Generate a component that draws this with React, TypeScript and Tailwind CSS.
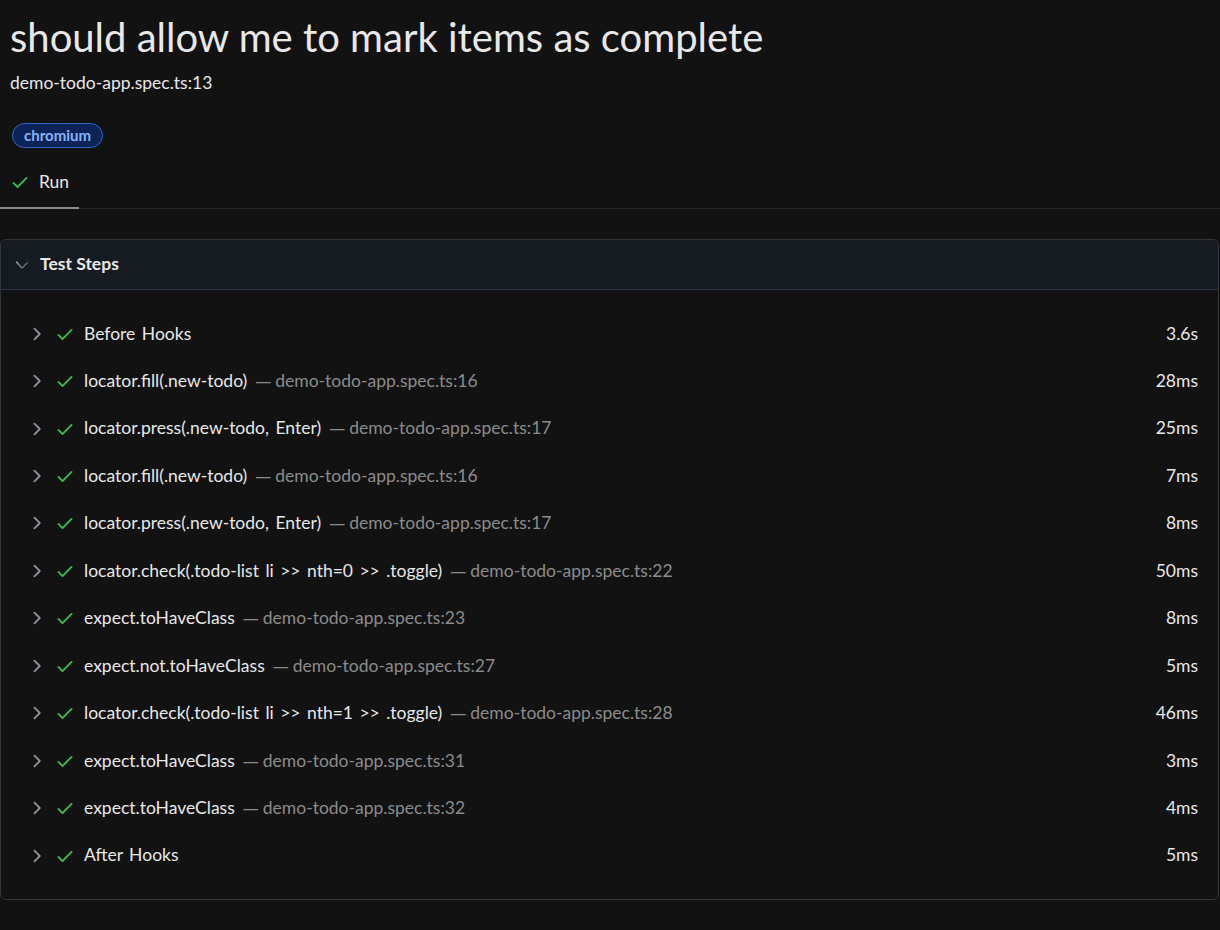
const FONT = "font-['Lato','Noto_Sans',sans-serif]";

const CheckIcon = ({ className = '' }: { className?: string }) => (
  <svg viewBox="0 0 16 16" width={20} height={20} className={className} fill="currentColor">
    <path d="M13.78 4.22a.75.75 0 0 1 0 1.06l-7.25 7.25a.75.75 0 0 1-1.06 0L2.22 9.28a.751.751 0 0 1 .018-1.042.751.751 0 0 1 1.042-.018L6 10.94l6.72-6.72a.75.75 0 0 1 1.06 0Z" />
  </svg>
);

const ChevronRight = () => (
  <svg viewBox="0 0 16 16" width={20} height={20} fill="currentColor" className="text-[#8b949e] shrink-0">
    <path d="M6.22 3.22a.75.75 0 0 1 1.06 0l4.25 4.25a.75.75 0 0 1 0 1.06l-4.25 4.25a.751.751 0 0 1-1.042-.018.751.751 0 0 1-.018-1.042L9.94 8 6.22 4.28a.75.75 0 0 1 0-1.06Z" />
  </svg>
);

const ChevronDown = () => (
  <svg viewBox="0 0 16 16" width={20} height={20} fill="currentColor" className="text-[#8b949e] shrink-0">
    <path d="M12.78 5.22a.749.749 0 0 1 0 1.06l-4.25 4.25a.749.749 0 0 1-1.06 0L3.22 6.28a.749.749 0 1 1 1.06-1.06L8 9.939l3.72-3.719a.749.749 0 0 1 1.06 0Z" />
  </svg>
);

const steps: { title: string; loc?: string; time: string }[] = [
  { title: 'Before Hooks', time: '3.6s' },
  { title: 'locator.fill(.new-todo)', loc: 'demo-todo-app.spec.ts:16', time: '28ms' },
  { title: 'locator.press(.new-todo, Enter)', loc: 'demo-todo-app.spec.ts:17', time: '25ms' },
  { title: 'locator.fill(.new-todo)', loc: 'demo-todo-app.spec.ts:16', time: '7ms' },
  { title: 'locator.press(.new-todo, Enter)', loc: 'demo-todo-app.spec.ts:17', time: '8ms' },
  { title: 'locator.check(.todo-list li >> nth=0 >> .toggle)', loc: 'demo-todo-app.spec.ts:22', time: '50ms' },
  { title: 'expect.toHaveClass', loc: 'demo-todo-app.spec.ts:23', time: '8ms' },
  { title: 'expect.not.toHaveClass', loc: 'demo-todo-app.spec.ts:27', time: '5ms' },
  { title: 'locator.check(.todo-list li >> nth=1 >> .toggle)', loc: 'demo-todo-app.spec.ts:28', time: '46ms' },
  { title: 'expect.toHaveClass', loc: 'demo-todo-app.spec.ts:31', time: '3ms' },
  { title: 'expect.toHaveClass', loc: 'demo-todo-app.spec.ts:32', time: '4ms' },
  { title: 'After Hooks', time: '5ms' },
];

export default function App() {
  return (
    <div className={`${FONT} min-h-[930px] bg-[#121212] text-[#e8e8e8]`}>
      <div className="px-[10px] pt-[11px]">
        <h1 className="text-[40px] leading-[52px]">should allow me to mark items as complete</h1>
        <div className="text-[17.5px] leading-[24px] mt-[8px]">demo-todo-app.spec.ts:13</div>
        <div className="mt-[28px] flex">
          <span className="ml-[2px] h-[25px] px-[11px] flex items-center rounded-full border border-[#3463c4] bg-[#0c2358] text-[#86b4f5] text-[15px] font-bold">
            chromium
          </span>
        </div>
      </div>
      <div className="mt-[23px] border-b border-[#2a2a2a] flex">
        <div className="w-[79px] h-[38px] -mb-px border-b-2 border-[#8a8a8a] flex items-start pl-[10px] gap-[9px]">
          <CheckIcon className="text-[#3fb950] mt-[1px]" />
          <span className="text-[17.5px] leading-[22px]">Run</span>
        </div>
      </div>
      <div className="mt-[30px] mr-px border border-[#30363d] rounded-[6px] overflow-hidden">
        <div className="h-[50px] bg-[#161b22] border-b border-[#30363d] flex items-center pl-[11px] gap-[8px]">
          <ChevronDown />
          <span className="text-[17.5px] font-bold">Test Steps</span>
        </div>
        <div className="py-[20px]">
          {steps.map((s, i) => (
            <div key={i} className="h-[47.45px] flex items-center pl-[25px] pr-[20px] text-[17.5px]">
              <ChevronRight />
              <CheckIcon className="text-[#3fb950] ml-[9px] shrink-0" />
              <span className="ml-[9px] whitespace-nowrap">
                <span className="[word-spacing:2px]">{s.title}</span>
                {s.loc && (
                  <span className="text-[#8b8b8b]">
                    <span className="ml-[8px] mr-[4px] text-[16px] font-['Noto_Sans',sans-serif]">—</span>
                    {s.loc}
                  </span>
                )}
              </span>
              <span className="ml-auto">{s.time}</span>
            </div>
          ))}
        </div>
      </div>
    </div>
  );
}
